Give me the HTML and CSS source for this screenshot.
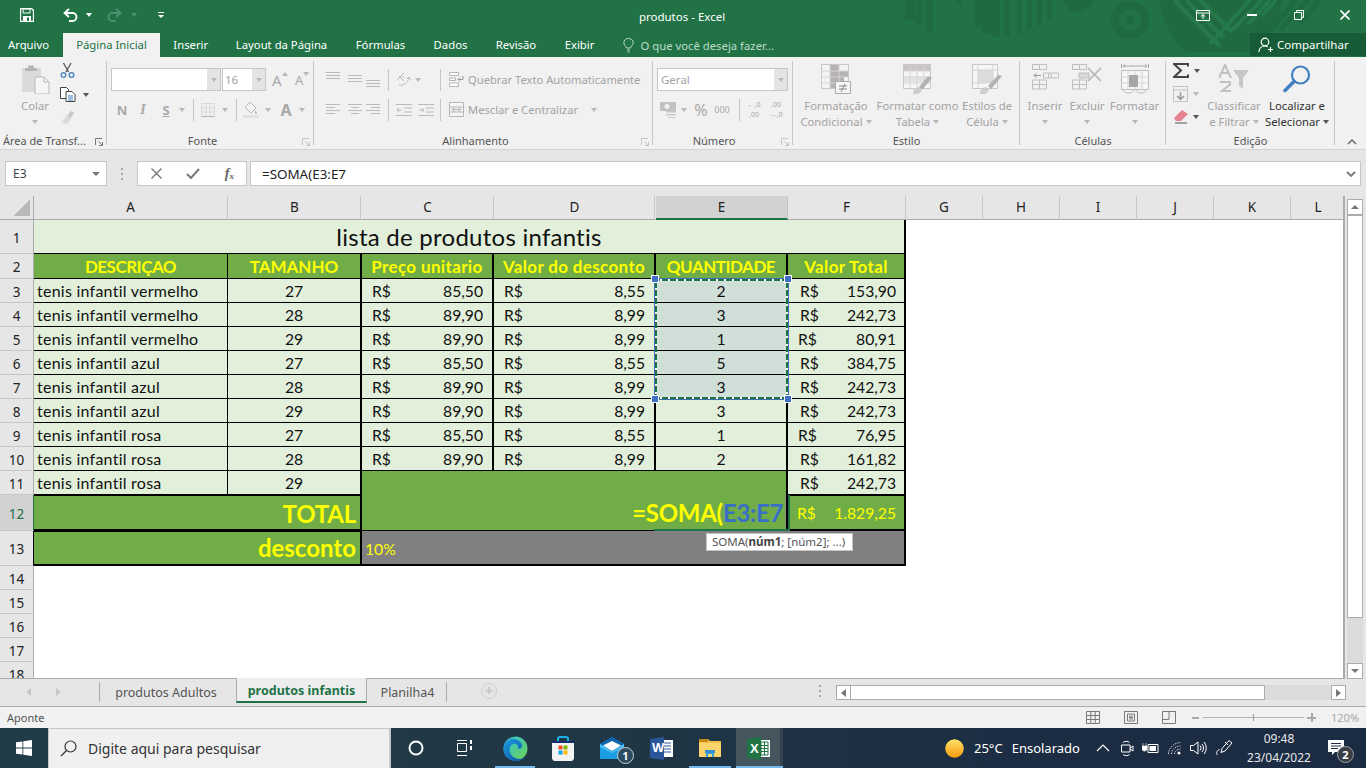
FILE: index.html
```html
<!DOCTYPE html>
<html lang="pt-BR">
<head>
<meta charset="utf-8">
<title>produtos - Excel</title>
<link rel="stylesheet" href="styles.css">
</head>
<body>
<div class="app">
  <div class="chrome">
  <svg class="pattern" width="466" height="57" viewBox="0 0 466 57" fill="none">
    <g fill="#1f6a40">
      <path d="M5 0h10v20H5zM16 0h6v24h-6zM26 0h7v32h-7zM54 0h8v8l-8-8zM75 0h25v37h-9v-3H82v-6h-7zM104 0h6v36h-6zM117 0h5v34h-5zM127 0h5v30h-5zM137 0h5v26h-5zM147 0h5v20h-5z"/>
      <circle cx="178" cy="-3" r="15"/>
    </g>
    <circle cx="230" cy="20" r="15" stroke="#1f6a40" stroke-width="8"/>
    <circle cx="230" cy="20" r="4" fill="#1f6a40"/>
    <path d="M260 0c2 22 14 40 26 52h66c18-12 28-30 30-52z" fill="#1f6a40"/>
    <path d="M274 0l46 46M286 0l38 38M300 0l32 32M350 0l-40 44M362 0l-30 30M370 0l-22 24M376 0l-14 16" stroke="#247a4a" stroke-width="4"/>
    <path d="M396 0l-34 40M408 0l-28 30M420 0l-20 24" stroke="#1f6a40" stroke-width="5"/>
  </svg>
  <header class="titlebar">
    <div class="qat">
      <svg class="q-save" width="14" height="14" viewBox="0 0 14 14"><path d="M.5.5h11l2 2v11H.5z" fill="none" stroke="#fff" stroke-width="1.300"/><path d="M3 1v4h7V1z" fill="none" stroke="#fff"/><path d="M3 8h8v5.500H3z" fill="#fff"/><rect x="7" y="9.500" width="2" height="3.500" fill="#217346"/></svg>
      <svg class="q-undo" width="15" height="14" viewBox="0 0 15 14"><path d="M6 1L1.500 5 6 9M2 5h7.500a4 4 0 0 1 0 8H6" fill="none" stroke="#fff" stroke-width="1.800"/></svg>
      <i class="tri-w q-c1"></i>
      <svg class="q-redo" width="15" height="14" viewBox="0 0 15 14"><path d="M9 1l4.500 4L9 9M13 5H5.500a4 4 0 0 0 0 8H9" fill="none" stroke="#4c9070" stroke-width="1.800"/></svg>
      <i class="tri-d q-c2"></i>
      <svg class="q-cust" width="8" height="8" viewBox="0 0 8 8"><path d="M1 1h6v1H1zM1 4h6L4 7z" fill="#fff"/></svg>
    </div>
    <div class="doc-title">produtos - Excel</div>
    <div class="winbtns">
      <svg class="w-rib" width="14" height="11" viewBox="0 0 14 11"><path d="M.5.500h13v10H.5zM.5 3h13M7 9V4.500M4.800 6.500L7 4.500l2.200 2" fill="none" stroke="#fff"/></svg>
      <svg class="w-min" width="10" height="3" viewBox="0 0 10 3"><path d="M0 0h10v2H0z" fill="#fff"/></svg>
      <svg class="w-res" width="10" height="10" viewBox="0 0 10 10"><path d="M.5 2.500h7v7h-7zM2.500 2.500v-2h7v7h-2" fill="none" stroke="#fff"/></svg>
      <svg class="w-close" width="10" height="10" viewBox="0 0 10 10"><path d="M.5.500l9 9M9.500.500l-9 9" stroke="#fff" stroke-width="1.700"/></svg>
    </div>
  </header>

  <nav class="tabs">
    <div class="tab t-arq">Arquivo</div>
    <div class="tab t-home">Página Inicial</div>
    <div class="tab t-ins">Inserir</div>
    <div class="tab t-lay">Layout da Página</div>
    <div class="tab t-for">Fórmulas</div>
    <div class="tab t-dad">Dados</div>
    <div class="tab t-rev">Revisão</div>
    <div class="tab t-exi">Exibir</div>
    <div class="tell">
      <svg width="11" height="15" viewBox="0 0 11 15"><path d="M3.500 10C3 8 .8 7 .8 4.600a4.700 4.200 0 0 1 9.400 0C10.200 7 8 8 7.500 10zM4 12h3M4.500 14h2" fill="none" stroke="#b7dcc7"/></svg>
      <span>O que você deseja fazer...</span>
    </div>
    <div class="share">
      <svg width="16" height="16" viewBox="0 0 16 16"><circle cx="7" cy="5" r="3.800" fill="none" stroke="#fff" stroke-width="1.200"/><path d="M.8 15c.5-4 3-6 6.200-6 1 0 2 .2 2.800.700M12.500 10v5M10 12.500h5" fill="none" stroke="#fff" stroke-width="1.200"/></svg>
      <span>Compartilhar</span>
    </div>
  </nav>
  </div>

  <section class="ribbon">
    <div class="group g-area">
      <div class="body">
        <div class="big b-colar">
          <svg class="ico" width="29" height="30" viewBox="0 0 29 30"><path d="M1 4h19v24H1z" fill="#dcd9da"/><path d="M7 4V1.500h6V4h3v3H4V4z" fill="#b9b6b7"/><path d="M14 13h9l5 5v12H14z" fill="#f6f5f6" stroke="#bdbabb"/><path d="M23 13v5h5" fill="none" stroke="#bdbabb"/></svg>
          <span class="lbl">Colar</span><span class="lbl"><i class="tri"></i></span>
        </div>
        <div class="stack">
          <svg width="15" height="15" viewBox="0 0 15 15"><path d="M3.500 0l5 9M11 0L6 9" stroke="#555" stroke-width="1.300" fill="none"/><circle cx="3.500" cy="12" r="2.300" fill="none" stroke="#3f7fbf" stroke-width="1.300"/><circle cx="11.500" cy="12" r="2.300" fill="none" stroke="#3f7fbf" stroke-width="1.300"/></svg>
          <div class="stack-row"><svg width="16" height="15" viewBox="0 0 16 15"><path d="M.5.500h6l2 2v9H.5z" fill="#fff" stroke="#444"/><path d="M6 4.500h6l3 3v7H6z" fill="#fff" stroke="#444"/><path d="M8 9h5M8 11h5M8 13h5" stroke="#3f7fbf"/></svg><i class="tri tri-dark"></i></div>
          <svg width="15" height="13" viewBox="0 0 15 13"><path d="M8 5l4-5 3 2-4 6z" fill="#c9c6c7"/><path d="M8 4l4 4-4 5-6-2c2-1 4-3 6-7z" fill="#dcd9da"/></svg>
        </div>
      </div>
      <div class="glabel">Área de Transf...<svg class="launch l-on" width="8" height="8" viewBox="0 0 8 8"><path d="M.5 7V.500H7M7.500 7.500L3.500 3.500M4 7.500h3.500V4" fill="none" stroke="#777"/></svg></div>
    </div>

    <div class="group g-fonte">
      <div class="body col">
        <div class="row font-r1">
          <div class="combo c-name"><b class="dd"><i class="tri"></i></b></div>
          <div class="combo c-size"><span>16</span><b class="dd"><i class="tri"></i></b></div>
          <span class="glyph g-a1">A<i class="tri tri-up"></i></span>
          <span class="glyph g-a2">A<i class="tri"></i></span>
        </div>
        <div class="row font-r2">
          <b class="gl">N</b><em class="gl gi">I</em><b class="gl gu">S</b><i class="tri"></i><i class="vsep"></i>
          <svg width="14" height="14" viewBox="0 0 14 14"><path d="M.5.500h13v13H.5zM5 .5v13M9 .5v13M.5 5h13M.5 9h13" fill="none" stroke="#c8c5c6" stroke-dasharray="1 1"/><path d="M.5 13.500h13" stroke="#b5b2b3"/></svg>
          <i class="tri"></i><i class="vsep"></i>
          <svg width="16" height="17" viewBox="0 0 16 17"><path d="M7 1l6 6-5 5-6-6z" fill="#f3f3f3" stroke="#bcb9ba"/><path d="M12 9c1 1.500 2 2 2 3a1 1 0 0 1-2 0z" fill="#bcb9ba"/><path d="M0 14h16v3H0z" fill="#e2e0e1"/></svg>
          <i class="tri"></i>
          <span class="gl ga">A</span><i class="tri"></i>
        </div>
      </div>
      <div class="glabel gl-16">Fonte<svg class="launch" width="8" height="8" viewBox="0 0 8 8"><path d="M.5 7V.500H7M7.500 7.500L3.500 3.500M4 7.500h3.500V4" fill="none" stroke="#c4c4c4"/></svg></div>
    </div>

    <div class="group g-alin">
      <div class="body col">
        <div class="row alin-r1">
          <svg class="ln l-top" width="14" height="7" viewBox="0 0 14 7"><path d="M0 .5h14M0 3.500h14M0 6.500h14"/></svg>
          <svg class="ln l-mid" width="14" height="7" viewBox="0 0 14 7"><path d="M0 .5h14M0 3.500h14M0 6.500h14"/></svg>
          <svg class="ln l-low" width="14" height="7" viewBox="0 0 14 7"><path d="M0 .5h14M0 3.500h14M0 6.500h14"/></svg>
          <i class="vsep"></i>
          <svg width="16" height="15" viewBox="0 0 16 15"><path d="M1 8l7-7M3 4l5 5M5 3l3 3" stroke="#bcb9ba" fill="none"/><path d="M3 13c4 1 9-2 10-7" fill="none" stroke="#bcb9ba"/><path d="M11 7l2-2 2 3" fill="none" stroke="#bcb9ba"/></svg>
          <i class="tri"></i>
          <i class="vsep v-end"></i>
          <div class="wide"><svg width="15" height="15" viewBox="0 0 15 15"><path d="M.5.500h9v3h-9zM.5 6h6v2.500h-6zM.5 11h9v3.500h-9z" fill="#fff" stroke="#b8b5b6"/><path d="M14 4v3.500H9M11 5.500L9 7.500l2 2" fill="none" stroke="#9a9798"/></svg><span>Quebrar Texto Automaticamente</span></div>
        </div>
        <div class="row alin-r2">
          <svg class="ln" width="14" height="11" viewBox="0 0 14 11"><path d="M0 .5h14M0 3.500h9M0 6.500h14M0 9.500h9"/></svg>
          <svg class="ln" width="14" height="11" viewBox="0 0 14 11"><path d="M0 .5h14M3 3.500h8M0 6.500h14M3 9.500h8"/></svg>
          <svg class="ln" width="14" height="11" viewBox="0 0 14 11"><path d="M0 .5h14M5 3.500h9M0 6.500h14M5 9.500h9"/></svg>
          <i class="vsep"></i>
          <svg class="ln" width="16" height="12" viewBox="0 0 16 12"><path d="M0 .5h16M8 4h8M8 8h8M0 11.500h16M6 6H1M3 4L1 6l2 2"/></svg>
          <svg class="ln l-endx" width="16" height="12" viewBox="0 0 16 12"><path d="M0 .5h16M8 4h8M8 8h8M0 11.500h16M1 6h5M4 4l2 2-2 2"/></svg>
          <i class="vsep v-end"></i>
          <div class="wide"><svg width="15" height="15" viewBox="0 0 15 15"><path d="M.5.500h14v14H.5zM.5 5h14M.5 10h14M5 5v5M10 5v5M3 7.500h9M4 6.500l-1 1 1 1M11 6.500l1 1-1 1" fill="#f6f6f6" stroke="#b8b5b6"/></svg><span>Mesclar e Centralizar</span><i class="tri t-merge"></i></div>
        </div>
      </div>
      <div class="glabel gl-16">Alinhamento<svg class="launch" width="8" height="8" viewBox="0 0 8 8"><path d="M.5 7V.500H7M7.500 7.500L3.500 3.500M4 7.500h3.500V4" fill="none" stroke="#c4c4c4"/></svg></div>
    </div>

    <div class="group g-num">
      <div class="body col">
        <div class="row num-r1"><div class="combo c-fmt"><span>Geral</span><b class="dd"><i class="tri"></i></b></div></div>
        <div class="row num-r2">
          <svg width="16" height="16" viewBox="0 0 16 16"><path d="M0 0h16v9H0z" fill="#c3c0c1"/><circle cx="7" cy="4.500" r="2.500" fill="#f1f1f1"/><path d="M6 9h10v1.500H6zM6 12h10v1.500H6zM8 15h7v1H8z" fill="#ccc9ca"/></svg>
          <i class="tri"></i>
          <span class="gl gp">%</span><span class="gl g0">000</span><i class="vsep"></i>
          <span class="deci"><span>←,0</span><span>,00</span></span>
          <span class="deci"><span>,00</span><span>→,0</span></span>
        </div>
      </div>
      <div class="glabel gl-18">Número<svg class="launch" width="8" height="8" viewBox="0 0 8 8"><path d="M.5 7V.500H7M7.500 7.500L3.500 3.500M4 7.500h3.500V4" fill="none" stroke="#c4c4c4"/></svg></div>
    </div>

    <div class="group g-est">
      <div class="body">
        <div class="big b-e1">
          <svg class="ico" width="30" height="30" viewBox="0 0 30 30"><path d="M.5.500h27v24H.5z" fill="#f3f3f3" stroke="#c9c6c7"/><path d="M9 1h9v6H9zM9 7h18v6H9zM9 13h14v6H9zM9 19h6v5H9z" fill="#b5b2b3"/><path d="M.5 7h27M.5 13h27M.5 19h27M9 .5v24M18 .5v24" stroke="#d6d3d4" fill="none"/><path d="M14.500 17.500h15v12h-15z" fill="#f6f6f6" stroke="#aaa"/><path d="M18 22h8M18 25h8M24 20l-4 8" stroke="#888" fill="none"/></svg>
          <span class="lbl">Formatação</span><span class="lbl">Condicional<i class="tri t-in"></i></span>
        </div>
        <div class="big b-e2">
          <svg class="ico" width="30" height="30" viewBox="0 0 30 30"><path d="M.5.500h27v24H.5z" fill="#f6f6f6" stroke="#c9c6c7"/><path d="M1 1h26v6H1z" fill="#c9c6c7"/><path d="M1 13h26v5H1z" fill="#e4e2e3"/><path d="M.5 7h27M.5 13h27M.5 19h27M7 1v23M14 1v23M21 1v23" stroke="#d6d3d4" fill="none"/><path d="M29 14L19 26l-3-3 9-11z" fill="#b4b1b2"/><path d="M10 30c0-6 5-8 8-6 2 2-1 6-4 6z" fill="#cfcccd"/></svg>
          <span class="lbl">Formatar como</span><span class="lbl">Tabela<i class="tri t-in"></i></span>
        </div>
        <div class="big b-e3">
          <svg class="ico" width="30" height="30" viewBox="0 0 30 30"><path d="M.5.500h25v24H.5z" fill="#f6f6f6" stroke="#c9c6c7"/><path d="M6 6h15v13H6z" fill="#dcdadb"/><path d="M.5 6h25M.5 19h25M6 .5v24M21 .5v24" stroke="#d6d3d4" fill="none"/><path d="M30 12L19 25l-3-3 10-11z" fill="#b4b1b2"/><path d="M8 30c0-6 5-8 8-6 2 2-1 6-4 6z" fill="#cfcccd"/></svg>
          <span class="lbl">Estilos de</span><span class="lbl">Célula<i class="tri t-in"></i></span>
        </div>
      </div>
      <div class="glabel">Estilo</div>
    </div>

    <div class="group g-cel">
      <div class="body">
        <div class="big b-c1">
          <svg class="ico" width="27" height="30" viewBox="0 0 27 30"><g fill="none" stroke="#c0bdbe"><path d="M.5.500h14v5h-14zM7.500.5v5M.5 16h14v9h-14zM.5 20.500h14M7.500 16v9M11.500 9h15v5h-15zM19 9v5M16.500 9v5"/></g><path d="M9 11.500H2M4.500 9L2 11.500 4.500 14" fill="none" stroke="#9a9798"/></svg>
          <span class="lbl">Inserir</span><span class="lbl"><i class="tri"></i></span>
        </div>
        <div class="big b-c2">
          <svg class="ico" width="30" height="30" viewBox="0 0 30 30"><g fill="none" stroke="#c0bdbe"><path d="M.5.500h14v5h-14zM7.500.5v5M.5 16h14v9h-14zM.5 20.500h14M7.500 16v9"/></g><path d="M7 9h10v5H7z" fill="#d9d7d8" stroke="#c0bdbe"/><path d="M16 4l13 13M29 4L16 17" stroke="#b5b2b3" stroke-width="1.500"/></svg>
          <span class="lbl">Excluir</span><span class="lbl"><i class="tri"></i></span>
        </div>
        <div class="big b-c3">
          <svg class="ico" width="28" height="30" viewBox="0 0 28 30"><path d="M.5 6.500h27v19H.5z" fill="#f6f6f6" stroke="#c0bdbe"/><path d="M7 6.500v19M14 6.500v19M21 6.500v19M.5 13h27M.5 19h27" stroke="#d6d3d4"/><path d="M8 11h9v12H8z" fill="#a9a6a7"/><path d="M.5 0v4M27.500 0v4M2 2h24M2 2l2-1.500M2 2l2 1.500M26 2l-2-1.500M26 2l-2 1.500" fill="none" stroke="#a9a6a7"/><path d="M2 25c0 3 3 4 6 4s4-1 5-3M15 26c1 2 2 3 5 3s5-1 5-4" fill="none" stroke="#c0bdbe"/></svg>
          <span class="lbl">Formatar</span><span class="lbl"><i class="tri"></i></span>
        </div>
      </div>
      <div class="glabel">Células</div>
    </div>

    <div class="group g-edi">
      <div class="body">
        <div class="stack s-edi">
          <div class="stack-row"><svg width="16" height="15" viewBox="0 0 16 15"><path d="M15 3.500V1H1l7 6.500L1 14h14v-2.500" fill="none" stroke="#444" stroke-width="2"/></svg><i class="tri tri-dark"></i></div>
          <div class="stack-row s2"><svg width="15" height="16" viewBox="0 0 15 16"><path d="M.5.500h14v15H.5z" fill="#f1f1f1" stroke="#c4c1c2"/><path d="M.5 4h14" stroke="#c4c1c2"/><path d="M7.500 6v7M4 10l3.500 3.500L11 10" fill="none" stroke="#9a9798" stroke-width="1.500"/></svg><i class="tri"></i></div>
          <div class="stack-row s2"><svg width="15" height="14" viewBox="0 0 15 14"><path d="M9 0l6 4-7 7H3L1 8z" fill="#e6828f"/><path d="M2 13h12" stroke="#555"/></svg><i class="tri tri-dark"></i></div>
        </div>
        <div class="big b-d1">
          <svg class="ico" width="30" height="30" viewBox="0 0 30 30"><path d="M0 14L6 1l6 13M2.500 9h7M1 18h10v2.500l-8 6.500h9" fill="none" stroke="#c2bfc0" stroke-width="2"/><path d="M14 6h16l-6 8v11l-4-3v-8z" fill="#c9c6c7"/></svg>
          <span class="lbl">Classificar</span><span class="lbl">e Filtrar<i class="tri t-in"></i></span>
        </div>
        <div class="big b-d2">
          <svg class="ico" width="28" height="29" viewBox="0 0 28 29"><circle cx="17.500" cy="10.500" r="8.500" fill="none" stroke="#3f7fbf" stroke-width="2.200"/><path d="M11 17L2 26" stroke="#3f7fbf" stroke-width="3.500" stroke-linecap="round"/></svg>
          <span class="lbl dark">Localizar e</span><span class="lbl dark">Selecionar<i class="tri tri-dark t-in"></i></span>
        </div>
      </div>
      <div class="glabel">Edição</div>
    </div>
    <div class="collapse"><svg width="10" height="6" viewBox="0 0 10 6"><path d="M1 5l4-4 4 4" fill="none" stroke="#6a6a6a" stroke-width="1.500"/></svg></div>
  </section>

  <section class="fbar">
    <div class="namebox"><span>E3</span><i class="tri tri-name"></i></div>
    <div class="dots"><i></i><i></i><i></i></div>
    <div class="fbtns">
      <svg width="11" height="11" viewBox="0 0 11 11"><path d="M.5.500l10 10M10.500.500l-10 10" stroke="#777" stroke-width="1.400"/></svg>
      <svg width="14" height="11" viewBox="0 0 14 11"><path d="M1 6l4 4 8-9" fill="none" stroke="#777" stroke-width="2"/></svg>
      <span class="fx">f<sub>x</sub></span>
    </div>
    <div class="finput"><span>=SOMA(E3:E7</span><svg width="10" height="6" viewBox="0 0 10 6"><path d="M1 1l4 4 4-4" fill="none" stroke="#777" stroke-width="1.800"/></svg></div>
  </section>

  <main class="sheet">
    <div class="grid">
      <div class="corner"><i></i></div>
      <div class="ch">A</div><div class="ch ls">B</div><div class="ch">C</div><div class="ch ls">D</div><div class="ch on">E</div><div class="ch">F</div><div class="ch">G</div><div class="ch">H</div><div class="ch">I</div><div class="ch">J</div><div class="ch">K</div><div class="ch">L</div>

      <div class="rh">1</div>
      <div class="c title">lista de produtos infantis</div>

      <div class="rh">2</div>
      <div class="c hd up">DESCRIÇAO</div><div class="c hd tk">TAMANHO</div><div class="c hd lc tk">Preço unitario</div><div class="c hd lc tk">Valor do desconto</div><div class="c hd up tk">QUANTIDADE</div><div class="c hd lc tk">Valor Total</div>

      <div class="rh">3</div><div class="c tx">tenis infantil vermelho</div><div class="c ct tk">27</div><div class="c ac tk"><span>R$</span><span>85,50</span></div><div class="c ac tk"><span>R$</span><span>8,55</span></div><div class="c ct tk cs">2</div><div class="c ac af tk"><span>R$</span><span>153,90</span></div>
      <div class="rh">4</div><div class="c tx">tenis infantil vermelho</div><div class="c ct tk">28</div><div class="c ac tk"><span>R$</span><span>89,90</span></div><div class="c ac tk"><span>R$</span><span>8,99</span></div><div class="c ct tk cs">3</div><div class="c ac af tk"><span>R$</span><span>242,73</span></div>
      <div class="rh">5</div><div class="c tx">tenis infantil vermelho</div><div class="c ct tk">29</div><div class="c ac tk"><span>R$</span><span>89,90</span></div><div class="c ac tk"><span>R$</span><span>8,99</span></div><div class="c ct tk cs">1</div><div class="c ac af ag tk"><span>R$</span><span>80,91</span></div>
      <div class="rh">6</div><div class="c tx">tenis infantil azul</div><div class="c ct tk">27</div><div class="c ac tk"><span>R$</span><span>85,50</span></div><div class="c ac tk"><span>R$</span><span>8,55</span></div><div class="c ct tk cs">5</div><div class="c ac af tk"><span>R$</span><span>384,75</span></div>
      <div class="rh">7</div><div class="c tx">tenis infantil azul</div><div class="c ct tk">28</div><div class="c ac tk"><span>R$</span><span>89,90</span></div><div class="c ac tk"><span>R$</span><span>8,99</span></div><div class="c ct tk cs">3</div><div class="c ac af tk"><span>R$</span><span>242,73</span></div>
      <div class="rh">8</div><div class="c tx">tenis infantil azul</div><div class="c ct tk">29</div><div class="c ac tk"><span>R$</span><span>89,90</span></div><div class="c ac tk"><span>R$</span><span>8,99</span></div><div class="c ct tk">3</div><div class="c ac af tk"><span>R$</span><span>242,73</span></div>
      <div class="rh">9</div><div class="c tx">tenis infantil rosa</div><div class="c ct tk">27</div><div class="c ac tk"><span>R$</span><span>85,50</span></div><div class="c ac tk"><span>R$</span><span>8,55</span></div><div class="c ct tk">1</div><div class="c ac af ag tk"><span>R$</span><span>76,95</span></div>
      <div class="rh">10</div><div class="c tx">tenis infantil rosa</div><div class="c ct tk">28</div><div class="c ac tk"><span>R$</span><span>89,90</span></div><div class="c ac tk"><span>R$</span><span>8,99</span></div><div class="c ct tk">2</div><div class="c ac af tk"><span>R$</span><span>161,82</span></div>
      <div class="rh">11</div><div class="c tx">tenis infantil rosa</div><div class="c ct tk">29</div>
      <div class="c merge tk"><div class="soma">=SOMA(<span class="ref">E3:E7</span></div></div>
      <div class="c ac af tk"><span>R$</span><span>242,73</span></div>

      <div class="rh rh-on">12</div>
      <div class="c sum s-total">TOTAL</div>
      <div class="c ac af tot tk"><span>R$</span><span>1.829,25</span></div>

      <div class="rh rh-k">13</div>
      <div class="c sum s-desc">desconto</div>
      <div class="c gray">10%</div>

      <div class="rh">14</div><div class="rh">15</div><div class="rh">16</div><div class="rh">17</div><div class="rh">18</div>

      <div class="sel"><i class="h h1"></i><i class="h h2"></i><i class="h h3"></i><i class="h h4"></i></div>
      <div class="editing"><i class="caret"></i></div>
      <div class="tip">SOMA(<b>núm1</b>; [núm2]; ...)</div>
    </div>
    <aside class="vscroll">
      <div class="sbtn"><i class="tri tri-up tri-sb"></i></div>
      <div class="vthumb"></div>
      <div class="vtrack"></div>
      <div class="sbtn"><i class="tri tri-sb"></i></div>
    </aside>
  </main>

  <section class="sheets">
    <div class="navs"><i class="na na-l"></i><i class="na na-r"></i></div>
    <div class="stab s-a">produtos Adultos</div>
    <div class="stab s-i">produtos infantis</div>
    <div class="stab s-p">Planilha4</div>
    <div class="plus">+</div>
    <div class="hdots"><i></i><i></i><i></i></div>
    <div class="hscroll">
      <div class="hbtn"><i class="na na-l dk"></i></div>
      <div class="hthumb"></div>
      <div class="htrack"></div>
      <div class="hbtn"><i class="na na-r dk"></i></div>
    </div>
  </section>

  <footer class="status">
    <span>Aponte</span>
    <div class="views">
      <svg width="14" height="13" viewBox="0 0 14 13"><path d="M.5.500h13v12H.5zM.5 4.500h13M.5 8.500h13M4.800.5v12M9.200.5v12" fill="none" stroke="#7a7a7a"/></svg>
      <svg width="14" height="13" viewBox="0 0 14 13"><path d="M.5.500h13v12H.5z" fill="none" stroke="#7a7a7a"/><path d="M3.500 3h7v7h-7zM5 5h4M5 6.500h4M5 8h4" fill="none" stroke="#7a7a7a"/></svg>
      <svg width="14" height="13" viewBox="0 0 14 13"><path d="M.5.500h13v12H.5zM.5 8.500h6.500v-8M7 .5h6.500" fill="none" stroke="#7a7a7a"/></svg>
    </div>
    <div class="zoom">
      <i class="zm"></i>
      <div class="slider"><i></i></div>
      <i class="zp"></i>
      <span>120%</span>
    </div>
  </footer>

  <footer class="taskbar">
    <div class="start"><svg width="16" height="16" viewBox="0 0 16 16"><path d="M0 2.300l6.500-.9v6.200H0zM7.300 1.300L16 0v7.600H7.300zM0 8.400h6.500v6.200L0 13.700zM7.300 8.400H16V16l-8.700-1.200z" fill="#fff"/></svg></div>
    <div class="search">
      <svg width="17" height="17" viewBox="0 0 17 17"><circle cx="10.500" cy="6.500" r="5.500" fill="none" stroke="#333" stroke-width="1.200"/><path d="M6.500 10.500L1 16" stroke="#333" stroke-width="1.300"/></svg>
      <span>Digite aqui para pesquisar</span>
    </div>
    <div class="tslot t-cort"><svg width="16" height="16" viewBox="0 0 16 16"><circle cx="8" cy="8" r="6.500" fill="none" stroke="#fff" stroke-width="2"/></svg></div>
    <div class="tslot t-view"><svg width="17" height="16" viewBox="0 0 17 16"><path d="M1 .5h10M1 15.500h10M1.500 3.500h9v8h-9z" fill="none" stroke="#fff"/><path d="M14 0h2v4h-2zM14 6h2v4h-2z" fill="#fff"/></svg></div>
    <div class="tslot run">
      <svg width="25" height="25" viewBox="0 0 25 25"><defs><linearGradient id="e1" x1="0" y1="0" x2="1" y2="1"><stop offset="0" stop-color="#2bc4e0"/><stop offset="1" stop-color="#6fd24c"/></linearGradient><linearGradient id="e2" x1="0" y1="0" x2="1" y2="1"><stop offset="0" stop-color="#1d9ae0"/><stop offset="1" stop-color="#0c4fa0"/></linearGradient></defs><circle cx="12.500" cy="12.500" r="12" fill="url(#e1)"/><path d="M.5 12.500C1 6 6 3 10 3c6 0 9 4 9 7 0 2-2 3-4 3 1-4-2-6-5-5-3 1-4 4-3 8 1 4 5 7 10 7 2 0 4-.7 6-3-2 3.500-6 5-9.500 5C6 25 .5 20 .5 12.500z" fill="url(#e2)"/></svg>
    </div>
    <div class="tslot">
      <svg width="24" height="25" viewBox="0 0 24 25"><path d="M7 6V2.500C7 1.500 8 1 9 1h6c1 0 2 .5 2 1.500V6" fill="none" stroke="#1cb0e8" stroke-width="2"/><path d="M1 5h22v17c0 1.500-1 3-3 3H4c-2 0-3-1.500-3-3z" fill="#f3f3f3"/><path d="M1 5h22v2H1z" fill="#12306e"/><path d="M7.500 9.500h4v4h-4z" fill="#f25022"/><path d="M12.500 9.500h4v4h-4z" fill="#7fba00"/><path d="M7.500 14.500h4v4h-4z" fill="#00a4ef"/><path d="M12.500 14.500h4v4h-4z" fill="#ffb900"/></svg>
    </div>
    <div class="tslot t-mail">
      <svg width="24" height="22" viewBox="0 0 24 22"><path d="M0 7L12 0l12 7v15H0z" fill="#1b9de2"/><path d="M0 7L12 0l12 7-12 7z" fill="#0f62ac"/><path d="M3 8.500L12 4l9 4.500L12 14z" fill="#fff"/><path d="M0 7l12 8 12-8v3l-12 6-12-6z" fill="#4fc3f7"/></svg>
      <span class="tbadge">1</span>
    </div>
    <div class="tslot">
      <svg width="23" height="23" viewBox="0 0 23 23"><path d="M7 3h16v17H7z" fill="#fff"/><path d="M13 6h8M13 9h8M13 12h8M13 15h8" stroke="#2b579a"/><path d="M0 2l14-2v23L0 21z" fill="#2b579a"/><text x="2" y="15" class="wl">W</text></svg>
    </div>
    <div class="tslot t-exp run">
      <svg width="22" height="18" viewBox="0 0 22 18"><path d="M0 0h9l2 2h11v16H0z" fill="#f2c14e"/><path d="M0 0h9v3H0z" fill="#c98a12"/><path d="M0 4h22v14H0z" fill="#fbd56b"/><path d="M7 13h8v5H7z" fill="#3ca0e0"/><path d="M6 11h10v3H6z" fill="#2f8fd0"/><path d="M9 15h4v3H9z" fill="#f8d775"/></svg>
    </div>
    <div class="tslot t-xl run">
      <svg width="23" height="23" viewBox="0 0 23 23"><path d="M7 3h16v17H7z" fill="#fff"/><path d="M14 5h7v13h-7z" fill="none" stroke="#217346"/><path d="M14 8.500h7M14 11.500h7M14 14.500h7M17.500 5v13" stroke="#217346"/><path d="M0 2l14-2v23L0 21z" fill="#217346"/><text x="3" y="15.500" class="xl">X</text></svg>
    </div>
    <div class="tray">
      <div class="wx">
        <svg width="19" height="19" viewBox="0 0 19 19"><defs><linearGradient id="s1" x1="0" y1="0" x2="0" y2="1"><stop offset="0" stop-color="#ffe36a"/><stop offset="1" stop-color="#f59a0c"/></linearGradient></defs><circle cx="9.500" cy="9.500" r="9.300" fill="url(#s1)"/></svg>
        <span class="wt">25°C</span><span class="wd">Ensolarado</span>
      </div>
      <div class="ti ti-1"><svg width="14" height="8" viewBox="0 0 14 8"><path d="M1 7l6-6 6 6" fill="none" stroke="#fff" stroke-width="1.200"/></svg></div>
      <div class="ti ti-2"><svg width="13" height="17" viewBox="0 0 13 17"><path d="M2 2.500C3.500 1 7 1 8.500 2.500M2 14.500c1.500 1.500 5 1.500 6.500 0" fill="none" stroke="#fff"/><path d="M.5 5h8.500v7H.5zM9 8l3-2v5l-3-2" fill="none" stroke="#fff"/></svg></div>
      <div class="ti ti-3"><svg width="17" height="12" viewBox="0 0 17 12"><path d="M6 2.500h10v8H6z" fill="none" stroke="#fff"/><path d="M7.500 4h6.500v5H7.500z" fill="#fff"/><path d="M0 4h5v3c0 1-1 2-2.500 2S0 8 0 7zM1 1v3M4 1v3" fill="#fff" stroke="#fff" stroke-width=".6"/></svg></div>
      <div class="ti ti-4"><svg width="13" height="13" viewBox="0 0 13 13"><path d="M.5 12C.5 6 6 .8 12.500.5M3.500 12c0-4 3.500-8 9-8M6.500 12c0-2 2-5 6-5" fill="none" stroke="#cfd5da" stroke-dasharray="1.500 1"/><circle cx="11" cy="11" r="1.500" fill="#fff"/></svg></div>
      <div class="ti ti-5"><svg width="17" height="14" viewBox="0 0 17 14"><path d="M.5 4.500h3L8 1v12L3.500 9.500h-3z" fill="none" stroke="#fff"/><path d="M10 4.500a3.500 3.500 0 0 1 0 5M12 3a6 6 0 0 1 0 8M14 1a9 9 0 0 1 0 12" fill="none" stroke="#fff"/></svg></div>
      <div class="ti ti-6"><svg width="17" height="16" viewBox="0 0 17 16"><path d="M13 .5l3 2.500-7 8-4 1.500 1-4z" fill="none" stroke="#fff"/><path d="M1.500 15c-2-2 0-5 2-5.500M9 2l3 3" fill="none" stroke="#fff"/></svg></div>
      <div class="clock"><span>09:48</span><span>23/04/2022</span></div>
      <div class="notif">
        <svg width="16" height="15" viewBox="0 0 16 15"><path d="M0 0h16v12H7l-3 3v-3H0z" fill="#fff"/><path d="M3 3.500h10M3 6h10M3 8.500h7" stroke="#1c2c42"/></svg>
        <span class="nbadge">2</span>
      </div>
    </div>
  </footer>
</div>
</body>
</html>
```
FILE: styles.css
```css
* { box-sizing: border-box; }
html, body { margin: 0; padding: 0; }
body { width: 1366px; height: 768px; overflow: hidden; font-family: "Noto Sans", "Open Sans", sans-serif; font-size: 12px; color: #444; }
i, b, em { font-style: normal; }
svg { display: block; flex: none; }
.app { display: flex; flex-direction: column; width: 1366px; height: 768px; }

/* generic triangles */
.tri { display: inline-block; width: 0; height: 0; border-left: 3.5px solid transparent; border-right: 3.5px solid transparent; border-top: 4px solid #b8b8b8; flex: none; }
.tri-dark { border-top-color: #555; }
.tri-up { border-top: 0; border-bottom: 4px solid #b8b8b8; }
.tri-w, .tri-d { display: block; width: 0; height: 0; border-left: 3.5px solid transparent; border-right: 3.5px solid transparent; border-top: 4px solid #fff; }
.tri-d { border-top-color: #4c9070; }
.vsep { display: block; width: 1px; height: 22px; background: #c6c6c6; justify-self: center; }
.v-end { justify-self: end; margin-right: 1px; }

/* title bar */
.chrome { position: relative; background: #217346; flex: none; height: 57px; overflow: hidden; }
.pattern { position: absolute; left: 900px; top: 0; }
.titlebar { position: relative; height: 33px; padding-bottom: 3px; color: #fff; display: flex; align-items: center; }
.qat { display: flex; align-items: center; position: relative; padding-left: 20px; width: 400px; }
.q-undo { margin-left: 29px; }
.q-c1 { margin-left: 8px; }
.q-redo { margin-left: 15px; }
.q-c2 { margin-left: 9px; }
.q-cust { margin-left: 20px; }
.doc-title { position: absolute; left: 582px; top: 8px; width: 200px; line-height: 18px; text-align: center; font-size: 11.5px; }
.winbtns { position: relative; margin-left: auto; display: grid; grid-template-columns: 48px 48px 46px 46px; justify-items: center; align-items: center; width: 188px; margin-right: -2px; }
.w-rib { margin-right: 2px; }

/* tabs */
.tabs { display: flex; align-items: stretch; height: 24px; position: relative; }
.tab { color: #fff; font-size: 11.3px; line-height: 24px; text-align: center; flex: none; }
.t-arq { width: 63px; text-align: left; padding-left: 8px; }
.t-home { width: 97px; background: #f1f1f1; color: #217346; }
.t-ins { width: 61.5px; }
.t-lay { width: 120px; }
.t-for { width: 78px; }
.t-dad { width: 62px; }
.t-rev { width: 69px; }
.t-exi { width: 58px; }
.tell { display: flex; align-items: center; gap: 7px; margin-left: 14px; color: #bcdcc9; font-size: 11.3px; height: 24px; }
.share { position: absolute; right: 0; top: 0; width: 116px; height: 23px; background: #185c37; color: #fff; display: flex; align-items: center; gap: 3px; padding-left: 8px; font-size: 11.5px; }

/* ribbon */
.ribbon { height: 93px; background: #f1f1f1; border-bottom: 1px solid #d4d4d4; display: flex; padding-top: 4px; flex: none; }
.group { position: relative; height: 88px; display: flex; flex-direction: column; flex: none; }
.group::after { content: ""; position: absolute; right: 0; top: 0; width: 1px; height: 84px; background: #c6c6c6; }
.body { flex: 1; display: flex; min-height: 0; }
.body.col { flex-direction: column; padding-top: 7px; }
.glabel { height: 16px; line-height: 16px; text-align: center; color: #555; font-size: 11px; position: relative; white-space: nowrap; }
.gl-16 { padding-right: 16px; }
.gl-18 { padding-right: 18px; }
.launch { position: absolute; top: 5px; right: 4px; }
.g-area { width: 107px; }
.g-fonte { width: 207px; }
.g-alin { width: 339px; }
.g-num { width: 140px; }
.g-est { width: 227px; }
.g-cel { width: 146px; }
.g-edi { width: 169px; }
.g-area .glabel { text-align: left; padding-left: 3px; }
.big { display: flex; flex-direction: column; align-items: center; padding-top: 3px; color: #a3a3a3; flex: none; }
.ico { margin-bottom: 4px; height: 30px; }
.lbl { height: 16px; line-height: 16px; white-space: nowrap; font-size: 11.3px; display: flex; align-items: center; }
.lbl.dark { color: #333; }
.t-in { margin-left: 3px; }
.b-colar { width: 42px; margin-left: 14px; }
.stack { display: flex; flex-direction: column; gap: 9px; padding: 2px 0 0 3px; }
.stack-row { display: flex; align-items: center; gap: 7px; }
.g-area .stack svg:first-child { margin-left: 1px; }
.row { display: grid; align-items: center; justify-items: center; height: 23px; }
.font-r1 { display: flex; padding-left: 4px; margin-bottom: 7px; }
.combo { height: 23px; background: #fff; border: 1px solid #c6c6c6; display: flex; align-items: center; position: relative; }
.dd { position: absolute; right: 0; top: 0; bottom: 0; width: 13px; background: #e4e4e4; display: flex; align-items: center; justify-content: center; }
.c-name { width: 110px; }
.c-size { width: 44px; margin-left: 1px; padding-left: 2px; color: #a3a3a3; font-size: 11.5px; }
.glyph { position: relative; color: #a9a9a9; font-size: 15px; display: flex; align-items: flex-start; line-height: 20px; }
.glyph .tri { margin-top: 2px; }
.g-a1 { margin-left: 6px; width: 20px; }
.g-a2 { margin-left: 3px; font-size: 13px; }
.font-r2 { grid-template-columns: 20px 22px 24px 8px 14px 16px 18px 4px 26px 8px 28px 4px; padding-left: 5px; }
.gl { color: #a9a9a9; font-size: 13px; }
.gi { font-family: "Liberation Serif", serif; font-style: italic; font-size: 14px; font-weight: 700; }
.gu { text-decoration: underline; }
.ga { font-size: 16px; font-weight: 700; }
.alin-r1, .alin-r2 { padding-left: 8px; }
.alin-r1 { grid-template-columns: 22px 22px 14px 16px 16px 12px 18px 1fr; margin-bottom: 7px; }
.alin-r2 { grid-template-columns: 22px 22px 14px 16px 16px 22px 8px 1fr; }
.ln { fill: none; stroke: #bdbabb; }
.l-top { margin-top: -8px; }
.l-mid { margin-top: -2px; }
.l-low { margin-top: 8px; }
.l-endx { justify-self: end; }
.wide { display: flex; align-items: center; gap: 4px; justify-self: start; padding-left: 7px; color: #a3a3a3; font-size: 11.2px; white-space: nowrap; }
.t-merge { margin-left: 9px; }
.num-r1 { display: flex; padding-left: 4px; margin-bottom: 7px; }
.c-fmt { width: 131px; padding-left: 3px; color: #a3a3a3; font-size: 11.5px; }
.num-r2 { grid-template-columns: 16px 16px 18px 24px 10px 20px 24px; padding-left: 7px; }
.gp { font-size: 16px; font-weight: 400; }
.g0 { font-size: 9px; }
.deci { display: flex; flex-direction: column; font-size: 7px; line-height: 9.5px; color: #a9a9a9; align-items: center; white-space: nowrap; }
.g-est .body { padding-left: 4px; }
.b-e1 { width: 78px; }
.b-e2 { width: 85px; }
.b-e3 { width: 54px; }
.g-cel .body { padding-left: 4px; }
.b-c1, .b-c2 { width: 42px; }
.b-c3 { width: 53px; }
.s-edi { padding: 2px 0 0 7px; gap: 8px; width: 41px; }
.s-edi .stack-row { gap: 5px; }
.b-d1 { width: 54px; }
.b-d2 { width: 66px; margin-left: 3px; }
.collapse { flex: 1; display: flex; align-items: flex-end; justify-content: center; padding: 0 0 4px 0; height: 88px; }
.collapse svg { margin-left: 2px; }

/* formula bar */
.fbar { height: 46px; background: #e6e6e6; display: flex; padding: 11px 5px 10px 5px; flex: none; align-items: stretch; }
.namebox { width: 102px; background: #fff; border: 1px solid #c6c6c6; display: flex; align-items: center; justify-content: space-between; padding: 0 6px 0 7px; color: #444; }
.tri-name { border-top-color: #777; border-left-width: 4px; border-right-width: 4px; }
.dots { width: 30px; display: flex; flex-direction: column; gap: 3px; align-items: center; justify-content: center; }
.dots i, .hdots i { display: block; width: 2px; height: 2px; background: #a6a6a6; }
.fbtns { width: 110px; background: #fff; border: 1px solid #c6c6c6; display: flex; align-items: center; justify-content: space-between; padding: 0 12px 0 13px; }
.fx { font-family: "Liberation Serif", serif; font-style: italic; font-weight: 700; color: #666; font-size: 14px; line-height: 14px; }
.fx sub { font-size: 9px; vertical-align: -1px; line-height: 0; }
.finput { flex: 1; margin-left: 3px; background: #fff; border: 1px solid #c6c6c6; display: flex; align-items: center; justify-content: space-between; padding: 0 4px 0 11px; color: #222; font-size: 13.4px; }

/* sheet */
.sheet { height: 483px; display: flex; flex: none; background: #e6e6e6; }
.grid { position: relative; width: 1345px; height: 483px; overflow: hidden; display: grid; grid-template-columns: 34px 194px 134px 132px 162px 132px 118px 77px 77px 77px 77px 77px 54px; grid-template-rows: 24px 34px 25px repeat(9, 24px) 36px 35px repeat(5, 24px); background: #fff; border-right: 2px solid #ababab; border-bottom: 1px solid #ababab; font-family: Lato, sans-serif; font-size: 15.7px; color: #111; }
.corner { background: #e6e6e6; border-right: 1px solid #ababab; border-bottom: 1px solid #ababab; position: relative; padding: 4px 0 0 14px; }
.corner i { display: block; width: 16px; height: 16px; background: linear-gradient(135deg, transparent 50%, #b9b9b9 50%); }
.ch { background: #e6e6e6; border-right: 1px solid #c6c6c6; border-bottom: 1px solid #ababab; text-align: center; line-height: 23px; font-family: "Noto Sans", sans-serif; font-size: 13.5px; color: #222; }
.ch:nth-child(13) { border-right: 0; }
.ch.ls { border-right-color: #e6e6e6; box-shadow: inset -1px 0 #c6c6c6; }
.ch.on { background: #d2d2d2; border-bottom: 2px solid #217346; color: #222; }
.rh { grid-column: 1; background: #e6e6e6; border-right: 1px solid #ababab; border-bottom: 1px solid #c6c6c6; text-align: center; display: flex; align-items: center; justify-content: center; font-family: "Noto Sans", sans-serif; font-size: 13.5px; color: #222; padding-top: 2px; }
.rh-on { background: #d2d2d2; border-right: 1px solid #217346; color: #217346; }
.rh-k { border-right-color: #000; }
.c { background: #e2efda; border-right: 1px solid #000; border-bottom: 1px solid #000; display: flex; align-items: center; white-space: nowrap; min-width: 0; }
.tk { border-right-width: 2px; }
.title { grid-column: span 6; justify-content: center; font-size: 24px; border-right-width: 2px; letter-spacing: .25px; }
.hd { background: #70ad47; color: #ff0; font-weight: 700; justify-content: center; font-size: 17px; }
.hd.up { letter-spacing: -.5px; }
.hd.lc { letter-spacing: .35px; }
.tx { padding-left: 3px; font-size: 16px; letter-spacing: .25px; }
.ct { justify-content: center; }
.cs { background: #d0e0d8; }
.ac { justify-content: space-between; padding: 0 9px 0 10px; }
.af { padding: 0 8px 0 12px; }
.ag { padding-left: 10px; }
.merge { grid-column: span 3; grid-row: span 2; background: #70ad47; color: #ff0; font-weight: 700; justify-content: flex-end; align-items: flex-end; padding: 0 3px 3px 0; font-size: 24px; letter-spacing: -.3px; border-bottom: 1px solid #000; }
.soma { line-height: 28px; }
.ref { color: #3a6fc8; }
.tot { background: #70ad47; color: #ff0; padding-left: 9px; border-top: 1px solid #000; border-bottom-width: 2px; }
.sum { grid-column: span 2; background: #70ad47; color: #ff0; font-weight: 700; justify-content: flex-end; padding-right: 4px; border-right-width: 2px; border-bottom-width: 2px; border-top: 1px solid #000; }
.s-total { font-size: 24px; letter-spacing: -.2px; padding-top: 2px; }
.s-desc { font-size: 24px; padding-bottom: 2px; }
.gray { grid-column: span 4; background: #808080; color: #ff0; padding-left: 3px; padding-top: 3px; border-right-width: 2px; border-bottom-width: 2px; }
.sel { position: absolute; grid-area: 4 / 6 / 9 / 7; left: -2px; right: -1px; top: -1px; bottom: -1px; outline: 1px solid #3f6fb5; outline-offset: -1px; pointer-events: none;
  background:
    repeating-linear-gradient(90deg, #217346 0 6px, #fff 6px 8px) 0 1px / 100% 2px no-repeat,
    repeating-linear-gradient(90deg, #217346 0 6px, #fff 6px 8px) 0 calc(100% - 1px) / 100% 2px no-repeat,
    repeating-linear-gradient(0deg, #217346 0 6px, #fff 6px 8px) 1px 0 / 2px 100% no-repeat,
    repeating-linear-gradient(0deg, #217346 0 6px, #fff 6px 8px) calc(100% - 1px) 0 / 2px 100% no-repeat; }
.h { position: absolute; width: 8px; height: 8px; background: #3f6fc4; border: 1px solid #fff; }
.h1 { left: -3px; top: -3px; }
.h2 { right: -3px; top: -3px; }
.h3 { left: -3px; bottom: -3px; }
.h4 { right: -3px; bottom: -3px; }
.editing { position: absolute; grid-area: 13 / 6 / 14 / 7; left: -2px; right: -2px; top: 0; bottom: 0; border-right: 2px solid #217346; border-bottom: 2px solid #217346; pointer-events: none; }
.caret { position: absolute; right: 2px; top: 0; bottom: 2px; width: 1px; background: #8a8a8a; }
.tip { position: absolute; left: 706px; top: 337px; width: 147px; height: 18px; background: #fff; border: 1px solid #c6c6c6; font-family: "Noto Sans", sans-serif; font-size: 11.5px; color: #555; line-height: 15px; padding-left: 5px; white-space: nowrap; }
.tip b { font-weight: 700; color: #444; }

/* vertical scrollbar */
.vscroll { width: 21px; display: flex; flex-direction: column; padding: 3px 3px 0 2px; }
.sbtn { height: 16px; background: #fff; border: 1px solid #ababab; display: flex; align-items: center; justify-content: center; flex: none; }
.tri-sb { border-left-width: 4px; border-right-width: 4px; border-top-color: #777; border-bottom-color: #777; }
.vthumb { height: 403px; background: #fff; border: 1px solid #ababab; flex: none; }
.vtrack { flex: 1; background: #dbdbdb; }

/* sheet tabs */
.sheets { height: 28px; background: #e6e6e6; border-bottom: 1px solid #ababab; display: flex; align-items: stretch; flex: none; position: relative; }
.navs { width: 100px; border-right: 1px solid #ababab; margin: 3px 0 4px; display: flex; align-items: center; padding-left: 26px; gap: 25px; }
.na { display: block; width: 0; height: 0; border-top: 4px solid transparent; border-bottom: 4px solid transparent; }
.na-l { border-right: 5px solid #c6c6c6; }
.na-r { border-left: 5px solid #c6c6c6; }
.na.dk.na-l { border-right-color: #777; }
.na.dk.na-r { border-left-color: #777; }
.stab { display: flex; align-items: center; justify-content: center; font-size: 12.5px; color: #555; }
.s-a { width: 136px; margin: 3px 0 4px; padding-right: 4px; }
.s-i { width: 131px; background: #ededed; color: #217346; font-weight: 700; border-bottom: 2px solid #217346; border-left: 1px solid #ababab; border-right: 1px solid #ababab; height: 25px; font-size: 12.5px; padding-top: 1px; margin-top: -1px; }
.s-p { width: 80px; margin: 3px 0 4px; border-right: 1px solid #ababab; padding-left: 2px; }
.plus { margin: 4px 0 0 34px; width: 16px; height: 16px; border: 1px solid #cfcfcf; border-radius: 50%; color: #c6c6c6; font-size: 15px; line-height: 13px; text-align: center; font-weight: 700; }
.hdots { position: absolute; left: 819px; top: 6px; display: flex; flex-direction: column; gap: 3px; }
.hscroll { position: absolute; left: 836px; top: 6px; width: 510px; height: 15px; display: flex; }
.hbtn { width: 15px; background: #fff; border: 1px solid #ababab; display: flex; align-items: center; justify-content: center; flex: none; }
.hthumb { width: 414px; background: #fff; border-right: 1px solid #ababab; border-top: 1px solid #ababab; border-bottom: 1px solid #ababab; }
.htrack { flex: 1; background: #dbdbdb; }

/* status */
.status { height: 21px; background: #f1f1f1; display: flex; align-items: center; padding: 0 0 1px 7px; font-size: 11px; color: #555; flex: none; position: relative; }
.views { position: absolute; left: 1086px; top: 4px; display: flex; gap: 24px; }
.zoom { position: absolute; left: 1192px; top: 0; height: 21px; display: flex; align-items: center; color: #a8a8a8; font-size: 11px; }
.zm { display: block; width: 7px; height: 2px; background: #a8a8a8; margin-right: 4px; }
.zp { display: block; width: 9px; height: 9px; margin-left: 3px; background: linear-gradient(#a8a8a8, #a8a8a8) center / 9px 2px no-repeat, linear-gradient(#a8a8a8, #a8a8a8) center / 2px 9px no-repeat; }
.slider { width: 101px; height: 1px; background: #b4b4b4; position: relative; }
.slider i { position: absolute; left: 50px; top: -3px; width: 1px; height: 7px; background: #999; }
.zoom span { margin-left: 15px; }

/* taskbar */
.taskbar { height: 40px; flex: none; display: flex; align-items: stretch; background: linear-gradient(90deg, #213c46 0%, #203845 40%, #1c2d43 75%, #1b2b42 100%); color: #fff; position: relative; }
.start { width: 48px; display: flex; align-items: center; justify-content: center; }
.search { width: 343px; background: #f0f0f0; border: 1px solid #c6c6c6; border-width: 1px 2px 0 1px; display: flex; align-items: center; padding-left: 11px; gap: 11px; color: #333; font-size: 14px; flex: none; }
.tslot { position: relative; width: 48px; display: flex; align-items: center; justify-content: center; flex: none; }
.t-cort { width: 50px; }
.t-view { width: 46px; margin-right: 4px; }
.t-mail { width: 50px; }
.t-exp { width: 50px; }
.t-xl { margin-left: 1px; width: 47px; background: #45565f; border-right: 3px solid #33444f; }
.run::after { content: ""; position: absolute; left: 4px; right: 4px; bottom: 0; height: 2px; background: #76b9ed; }
.t-xl.run::after { left: 0; right: -3px; }
.wl { font: 700 13px "Liberation Sans", sans-serif; fill: #fff; }
.xl { font: 700 13px "Liberation Sans", sans-serif; fill: #fff; }
.tbadge { position: absolute; left: 30px; top: 19px; width: 17px; height: 17px; border-radius: 50%; background: #2c4c60; border: 1px solid #c9d0d4; font-size: 11px; font-weight: 700; line-height: 15px; text-align: center; color: #fff; }
.tray { position: absolute; left: 945px; top: 0; bottom: 0; right: 0; display: flex; align-items: center; }
.wx { width: 145px; display: flex; align-items: center; font-size: 13px; flex: none; }
.wt { margin-left: 10px; }
.wd { margin-left: 9px; }
.ti { display: flex; justify-content: center; flex: none; }
.ti-1 { width: 26px; }
.ti-2 { width: 23px; }
.ti-3 { width: 23px; }
.ti-4 { width: 25px; }
.ti-5 { width: 22px; }
.ti-6 { width: 30px; }
.clock { width: 76px; display: flex; flex-direction: column; align-items: center; font-size: 12px; line-height: 19px; margin-left: 2px; flex: none; color: #e6e9ec; }
.notif { position: relative; width: 38px; display: flex; justify-content: center; }
.notif svg { margin-top: -2px; }
.nbadge { position: absolute; left: 20px; top: 4px; width: 17px; height: 17px; border-radius: 50%; background: #3a3f46; border: 1px solid #9aa0a6; font-size: 11px; font-weight: 700; line-height: 15px; text-align: center; }
```
